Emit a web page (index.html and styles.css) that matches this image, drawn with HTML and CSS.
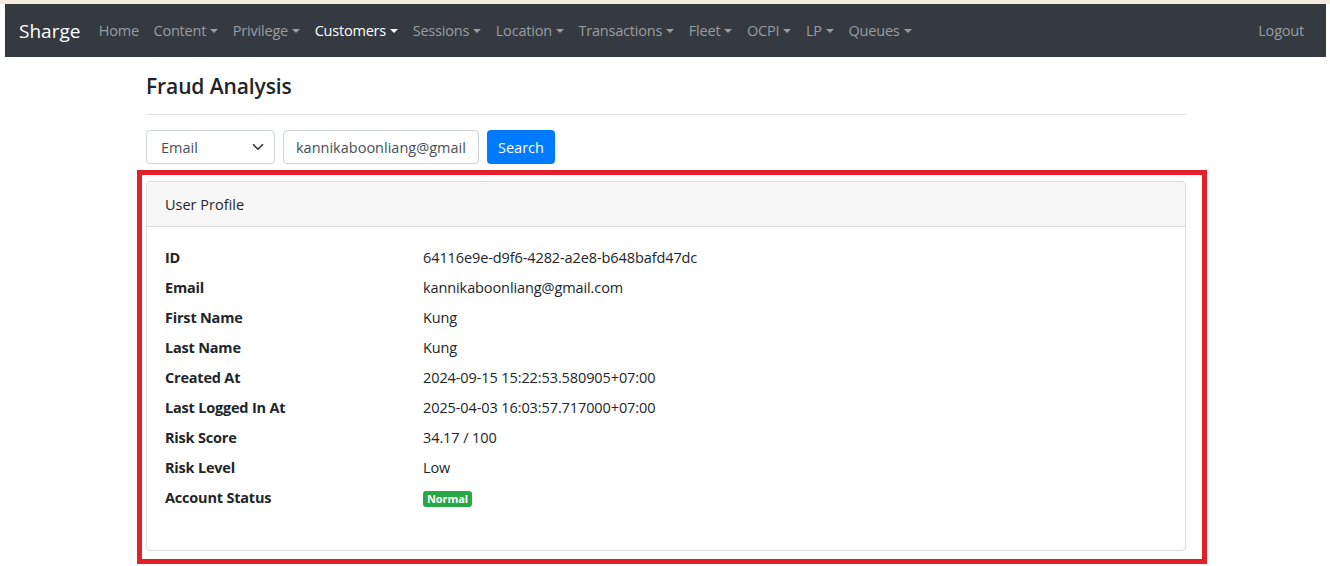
FILE: index.html
```html
<!DOCTYPE html>
<html lang="en">
<head>
<meta charset="utf-8">
<title>Fraud Analysis</title>
<link rel="stylesheet" href="styles.css">
</head>
<body>
<div class="topstrip"></div>
<nav class="navbar">
  <a class="brand" href="#">Sharge</a>
  <ul class="nav">
    <li><a class="nav-link" href="#">Home</a></li>
    <li><a class="nav-link dd" href="#">Content</a></li>
    <li><a class="nav-link dd" href="#">Privilege</a></li>
    <li><a class="nav-link dd active" href="#">Customers</a></li>
    <li><a class="nav-link dd" href="#">Sessions</a></li>
    <li><a class="nav-link dd" href="#">Location</a></li>
    <li><a class="nav-link dd" href="#">Transactions</a></li>
    <li><a class="nav-link dd" href="#">Fleet</a></li>
    <li><a class="nav-link dd" href="#">OCPI</a></li>
    <li><a class="nav-link dd" href="#">LP</a></li>
    <li><a class="nav-link dd" href="#">Queues</a></li>
  </ul>
  <a class="nav-link logout" href="#">Logout</a>
</nav>
<main class="container">
  <h1 class="title">Fraud Analysis</h1>
  <hr class="divider">
  <form class="search">
    <div class="select">
      <span>Email</span>
      <svg class="chev" viewBox="0 0 16 16" width="12" height="12"><path d="M2 5l6 6 6-6" fill="none" stroke="#343a40" stroke-width="2.2" stroke-linecap="round" stroke-linejoin="round"/></svg>
    </div>
    <input class="input" type="text" value="kannikaboonliang@gmail.com">
    <button class="btn" type="button">Search</button>
  </form>
  <div class="highlight">
    <div class="card">
      <div class="card-header">User Profile</div>
      <div class="card-body">
        <div class="row"><div class="label">ID</div><div class="value">64116e9e-d9f6-4282-a2e8-b648bafd47dc</div></div>
        <div class="row"><div class="label">Email</div><div class="value">kannikaboonliang@gmail.com</div></div>
        <div class="row"><div class="label">First Name</div><div class="value">Kung</div></div>
        <div class="row"><div class="label">Last Name</div><div class="value">Kung</div></div>
        <div class="row"><div class="label">Created At</div><div class="value">2024-09-15 15:22:53.580905+07:00</div></div>
        <div class="row"><div class="label">Last Logged In At</div><div class="value">2025-04-03 16:03:57.717000+07:00</div></div>
        <div class="row"><div class="label">Risk Score</div><div class="value">34.17 / 100</div></div>
        <div class="row"><div class="label">Risk Level</div><div class="value">Low</div></div>
        <div class="row"><div class="label">Account Status</div><div class="value"><span class="badge">Normal</span></div></div>
      </div>
    </div>
  </div>
</main>
</body>
</html>
```

FILE: styles.css
```css
* { box-sizing: border-box; }
html, body { margin: 0; padding: 0; background: #fff; }
body {
  font-family: "Open Sans", "Noto Sans", "Liberation Sans", sans-serif;
  font-size: 15px;
  color: #212529;
  width: 1330px;
  height: 566px;
  overflow: hidden;
}
.topstrip { height: 4px; background: #f4ecdc; }
.navbar {
  margin: 0 4px 0 5px;
  height: 53px;
  background: #343a40;
  display: flex;
  align-items: center;
  padding: 0 14px;
}
.brand {
  color: #fff;
  text-decoration: none;
  font-size: 19px;
  margin-right: 11px;
}
.nav {
  list-style: none;
  margin: 0;
  padding: 0;
  display: flex;
  flex: 1;
}
.nav-link {
  display: flex;
  align-items: center;
  color: #9a9da0;
  text-decoration: none;
  font-size: 14.5px;
  padding: 0 7.3px;
  letter-spacing: -0.2px;
}
.nav-link.active { color: #fff; }
.dd::after {
  content: "";
  display: inline-block;
  margin-left: 4px;
  border-top: 4px solid currentColor;
  border-left: 4px solid transparent;
  border-right: 4px solid transparent;
}
.logout { padding-right: 8px; }
.container {
  width: 1040px;
  margin: 0 0 0 146px;
}
.title {
  margin: 16px 0 0;
  font-size: 21px;
  font-weight: 600;
  line-height: 26px;
  letter-spacing: -0.1px;
}
.divider {
  margin: 15px 0 0;
  border: 0;
  border-top: 1px solid #e3e3e3;
}
.search {
  margin-top: 15px;
  display: flex;
  gap: 8px;
  height: 34px;
}
.select, .input {
  height: 34px;
  border: 1px solid #ced4da;
  border-radius: 4px;
  font-family: inherit;
  font-size: 14.5px;
  color: #495057;
  background: #fff;
}
.select {
  width: 129px;
  display: flex;
  align-items: center;
  justify-content: space-between;
  padding: 0 10px 0 14px;
}
.input {
  width: 196px;
  padding: 0 12px;
  outline: none;
}
.btn {
  height: 34px;
  width: 68px;
  background: #007bff;
  color: #fff;
  border: 0;
  border-radius: 4px;
  font-family: inherit;
  font-size: 14.5px;
  padding: 0;
}
.highlight {
  margin: 6px -21px 0 -9px;
  border: 5px solid #e3202a;
  padding: 6px 16px 8px 4px;
}
.card {
  border: 1px solid #dcdcdc;
  border-radius: 4px;
  height: 370px;
  overflow: hidden;
}
.card-header {
  background: #f7f7f7;
  border-bottom: 1px solid #dcdcdc;
  height: 45px;
  padding: 0 18px;
  display: flex;
  align-items: center;
  font-size: 14.5px;
}
.card-body { padding: 15px 18px; }
.row {
  display: grid;
  grid-template-columns: 258px 1fr;
  height: 30px;
  align-items: center;
  font-size: 14.5px;
}
.label { font-weight: 700; letter-spacing: -0.2px; }
.value { letter-spacing: -0.1px; }
.badge {
  display: inline-block;
  background: #28a745;
  color: #fff;
  font-size: 11px;
  font-weight: 700;
  line-height: 16px;
  padding: 0 4px;
  border-radius: 3px;
  vertical-align: middle;
}
```
